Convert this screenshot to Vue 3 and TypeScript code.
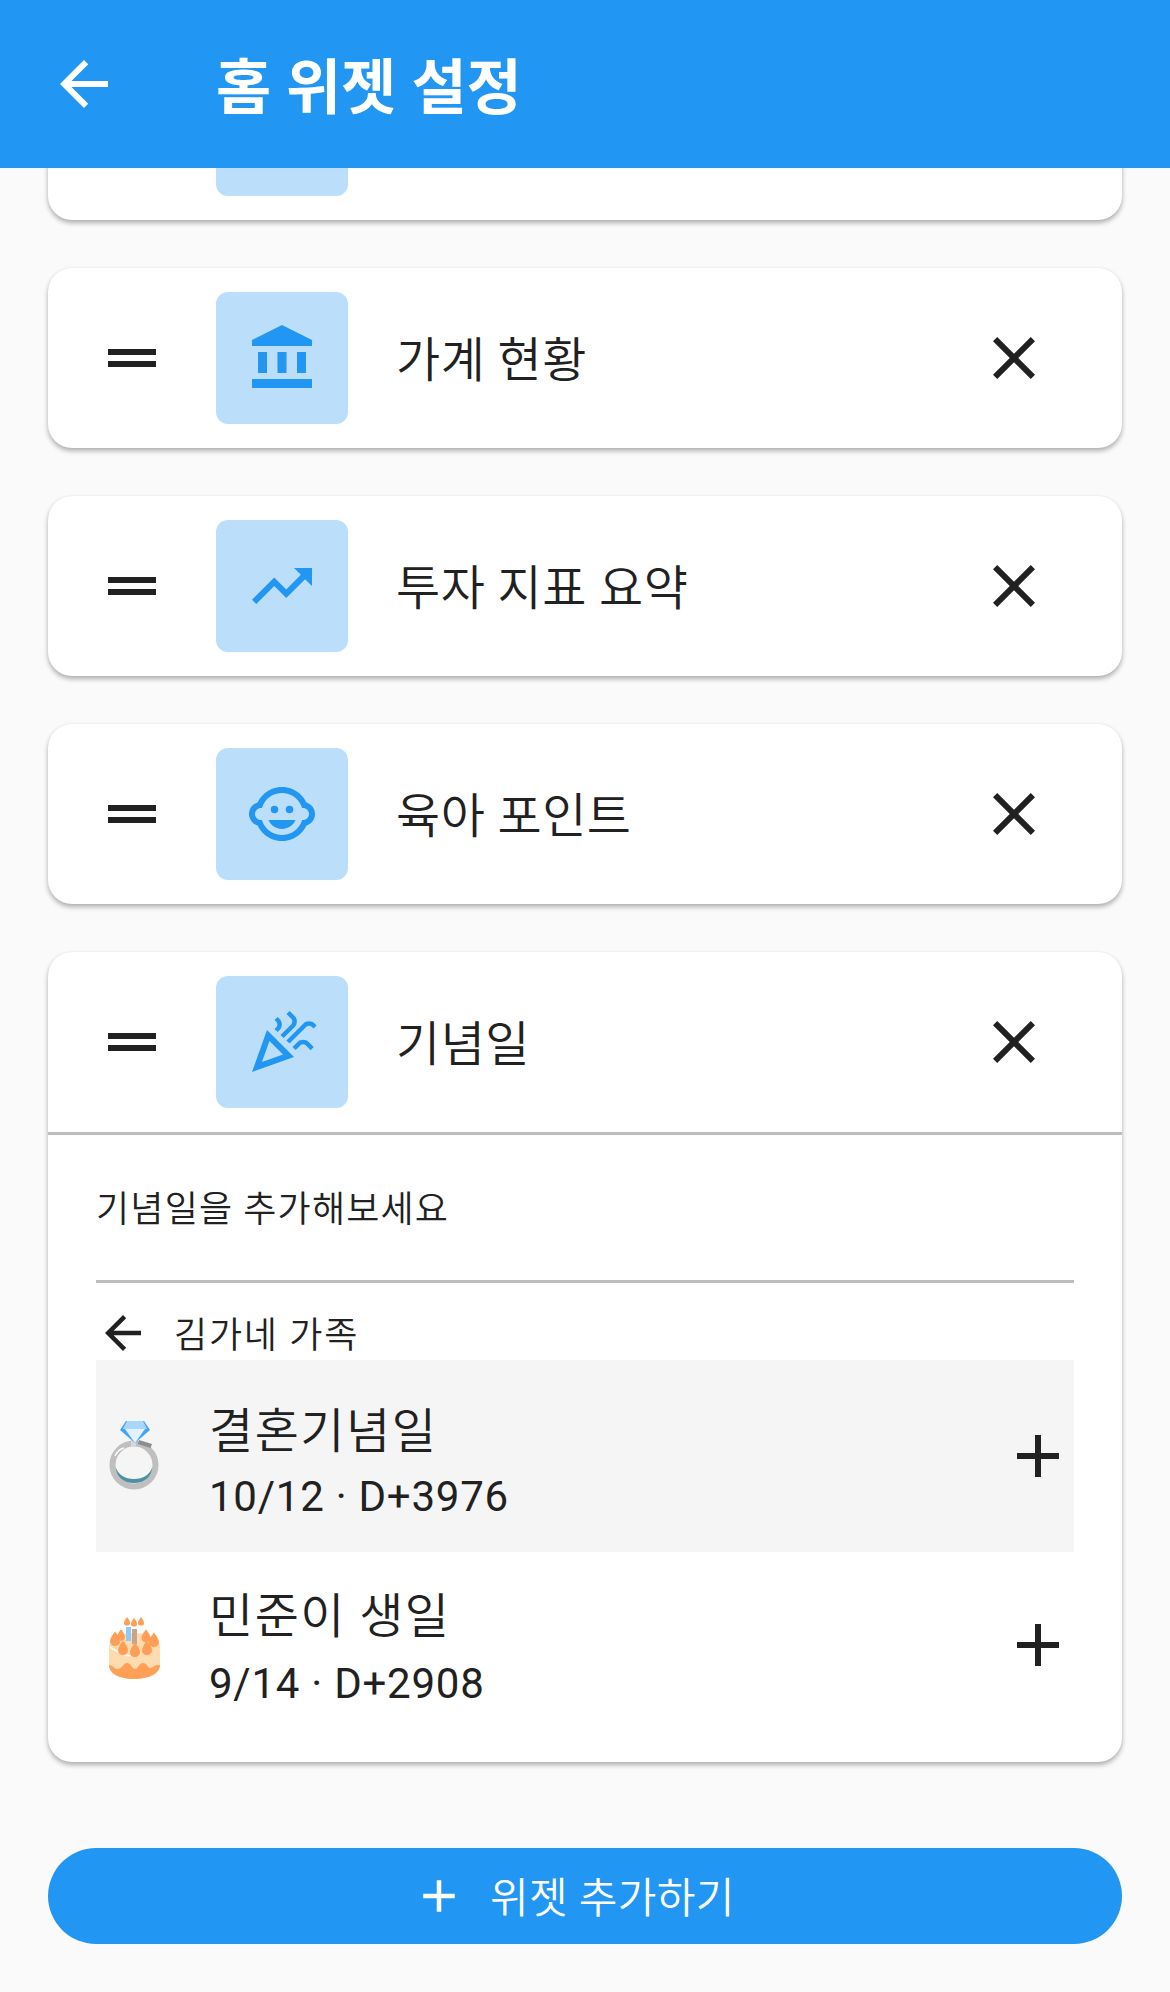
<template>
  <div class="page">
    <header class="app-bar">
      <button class="bar-back" aria-label="뒤로">
        <svg class="icon-72" viewBox="0 0 24 24"><path d="M20 11H7.83l5.59-5.59L12 4l-8 8 8 8 1.41-1.41L7.83 13H20v-2z" /></svg>
      </button>
      <h1 class="bar-title">홈 위젯 설정</h1>
    </header>

    <main class="list">
      <section class="card scrolled">
        <div class="row">
          <svg class="icon-72 handle" viewBox="0 0 24 24"><path :d="dragPath" /></svg>
          <div class="tile"></div>
        </div>
      </section>

      <section v-for="w in widgets" :key="w.title" class="card">
        <div class="row">
          <svg class="icon-72 handle" viewBox="0 0 24 24"><path :d="dragPath" /></svg>
          <div class="tile">
            <svg class="icon-72" viewBox="0 0 24 24">
              <circle v-if="w.eyes" cx="14.5" cy="10.5" r="1.25" />
              <circle v-if="w.eyes" cx="9.5" cy="10.5" r="1.25" />
              <path :d="w.icon" />
            </svg>
          </div>
          <span class="row-title">{{ w.title }}</span>
          <svg class="icon-72 close" viewBox="0 0 24 24"><path d="M19 6.41 17.59 5 12 10.59 6.41 5 5 6.41 10.59 12 5 17.59 6.41 19 12 13.41 17.59 19 19 17.59 13.41 12z" /></svg>
        </div>

        <div v-if="w.expanded" class="detail">
          <div class="field">기념일을 추가해보세요</div>
          <div class="crumb">
            <svg class="icon-54" viewBox="0 0 24 24"><path d="M20 11H7.83l5.59-5.59L12 4l-8 8 8 8 1.41-1.41L7.83 13H20v-2z" /></svg>
            <span>김가네 가족</span>
          </div>

          <div class="item hovered">
            <svg class="emoji" viewBox="13 10 54 72">
              <circle cx="39" cy="55" r="21.5" fill="none" stroke="#bfbfbf" stroke-width="6" />
              <path d="M20.5 57c1 10 8 16 18.500 16s17.500-6 18.500-16c-3 8-9 12-18.500 12s-15.500-4-18.500-12z" fill="#4f8fa3" />
              <path d="M20 46c2-4 5-7 9-8" fill="none" stroke="#fff" stroke-width="1.500" />
              <path d="M44 30l13 4-1.500 4-12.500-4z" fill="#8d8d8d" />
              <rect x="36" y="30" width="5" height="7" fill="#d8d8d8" />
              <path d="M31 11h18l6 9-15 13-15-13z" fill="#42a5f5" />
              <path d="M32 11h16l4 8H28z" fill="#a9d7fb" />
              <path d="M30 19h20l-10 14z" fill="#e3f2fd" />
            </svg>
            <div class="item-text">
              <div class="item-title">결혼기념일</div>
              <div class="item-sub">10/12 · D+3976</div>
            </div>
            <svg class="icon-72 add" viewBox="0 0 24 24"><path :d="addPath" /></svg>
          </div>

          <div class="item second">
            <svg class="emoji" viewBox="13 4 54 72">
              <path d="M14 42c0-8 12-14 25-14s26 6 26 14v17c0 9-12 15-26 15S14 68 14 59z" fill="#ffdcb0" />
              <path d="M14 60c4 0 5 4 9 4s5-6 9-6 5 6 8 6 4-6 8-6 5 6 8 5 5-4 9-3c0 9-12 14-26 14S14 69 14 60z" fill="#ffa057" />
              <path d="M15 42c7 5 14 8 20 9" fill="none" stroke="#fff" stroke-width="1.500" />
              <rect x="31" y="22" width="5" height="14" fill="#90caf9" />
              <rect x="37" y="24" width="5" height="15" fill="#c9a48a" />
              <path v-for="(b, i) in berries" :key="i" :d="dropPath(b[0], b[1], b[2])" fill="#ff9f57" />
            </svg>
            <div class="item-text">
              <div class="item-title">민준이 생일</div>
              <div class="item-sub">9/14 · D+2908</div>
            </div>
            <svg class="icon-72 add" viewBox="0 0 24 24"><path :d="addPath" /></svg>
          </div>
        </div>
      </section>
    </main>

    <footer class="footer">
      <button class="add-widget">
        <svg class="icon-54" viewBox="0 0 24 24"><path :d="addPath" /></svg>
        <span>위젯 추가하기</span>
      </button>
    </footer>
  </div>
</template>

<script setup lang="ts">
interface WidgetRow {
  title: string
  icon: string
  eyes?: boolean
  expanded?: boolean
}

const dragPath = 'M20 9H4v2h16V9zM4 15h16v-2H4v2z'
const addPath = 'M19 13h-6v6h-2v-6H5v-2h6V5h2v6h6v2z'

const widgets: WidgetRow[] = [
  {
    title: '가계 현황',
    icon: 'M4 10h3v7H4zM10.5 10h3v7h-3zM2 19h20v3H2zM17 10h3v7h-3zM12 1L2 6v2h20V6z',
  },
  {
    title: '투자 지표 요약',
    icon: 'M16 6l2.29 2.29-4.88 4.88-4-4L2 16.59 3.41 18l6-6 4 4 6.3-6.29L22 12V6z',
  },
  {
    title: '육아 포인트',
    eyes: true,
    icon: 'M22.94 12.66c.04-.21.06-.43.06-.66s-.02-.45-.06-.66c-.25-1.51-1.36-2.74-2.81-3.17-.53-1.12-1.28-2.1-2.19-2.91C16.36 3.85 14.28 3 12 3s-4.36.85-5.94 2.26c-.92.81-1.67 1.8-2.19 2.91-1.45.43-2.56 1.65-2.81 3.17-.04.21-.06.43-.06.66s.02.45.06.66c.25 1.51 1.36 2.74 2.81 3.17.52 1.11 1.27 2.09 2.17 2.89C7.62 20.14 9.71 21 12 21s4.38-.86 5.97-2.28c.9-.8 1.65-1.79 2.17-2.89 1.44-.43 2.55-1.65 2.8-3.17zM19 14c-.1 0-.19-.02-.29-.03-.2.67-.49 1.29-.86 1.86C16.6 17.74 14.45 19 12 19s-4.6-1.26-5.85-3.17c-.37-.57-.66-1.19-.86-1.86-.1.01-.19.03-.29.03-1.1 0-2-.9-2-2s.9-2 2-2c.1 0 .19.02.29.03.2-.67.49-1.29.86-1.86C7.4 6.26 9.55 5 12 5s4.6 1.26 5.85 3.17c.37.57.66 1.19.86 1.86.1-.01.19-.03.29-.03 1.1 0 2 .9 2 2s-.9 2-2 2zM7.5 14c.76 1.77 2.49 3 4.5 3s3.74-1.23 4.5-3h-9z',
  },
  {
    title: '기념일',
    expanded: true,
    icon: 'M2 22l14-5-9-9zm10.35-5.82L5.3 18.7l2.52-7.05 4.53 4.53zm2.18-3.65l5.59-5.59c.49-.49 1.28-.49 1.77 0l.59.59 1.06-1.06-.59-.59c-1.07-1.07-2.82-1.07-3.89 0l-5.59 5.59 1.06 1.06zm-4.44-5.48l-.59.59 1.06 1.06.59-.59c1.07-1.07 1.07-2.82 0-3.89l-.59-.59-1.06 1.07.59.59c.48.48.48 1.28 0 1.76zm7 5l-1.59 1.59 1.06 1.06 1.59-1.59c.49-.49 1.28-.49 1.77 0l1.61 1.61 1.06-1.06-1.61-1.61c-1.08-1.07-2.82-1.07-3.89 0zm-2-6l-3.59 3.59 1.06 1.06 3.59-3.59c1.07-1.07 1.07-2.82 0-3.89l-1.59-1.59-1.06 1.06 1.59 1.59c.48.49.48 1.29 0 1.77z',
  },
]

// 케이크 위 딸기와 촛불 [x, y, 크기]
const berries: number[][] = [
  [20, 35, 5], [28, 44, 5], [40, 46, 5], [52, 44, 5], [59, 36, 5],
  [51, 32, 4.500], [26, 31, 4], [32, 17, 3], [39, 18, 3], [46, 17, 3],
]

function dropPath(x: number, y: number, r: number) {
  return `M${x} ${y - r * 1.7}C${x + r * 0.5} ${y - r} ${x + r} ${y - r * 0.4} ${x + r} ${y + r * 0.3}` +
    `A${r} ${r * 0.9} 0 0 1 ${x - r} ${y + r * 0.3}C${x - r} ${y - r * 0.4} ${x - r * 0.5} ${y - r} ${x} ${y - r * 1.7}z`
}
</script>

<style scoped>
.page {
  display: flex;
  flex-direction: column;
  height: 1992px;
  background: #fafafa;
  color: #212121;
  font-family: Roboto, "Noto Sans CJK KR", sans-serif;
  font-weight: 350;
}

.app-bar {
  position: relative;
  z-index: 1;
  display: flex;
  align-items: center;
  flex: none;
  height: 168px;
  padding-left: 48px;
  background: #2196f3;
  color: #fff;
}

.bar-back {
  display: flex;
  padding: 0;
  border: 0;
  background: none;
  color: inherit;
}

.bar-title {
  margin: 0 0 0 96px;
  padding-top: 10px;
  font-size: 60px;
  font-weight: 700;
  line-height: 72px;
}

.icon-72 {
  flex: none;
  width: 72px;
  height: 72px;
  fill: currentColor;
}

.icon-54 {
  flex: none;
  width: 54px;
  height: 54px;
  fill: currentColor;
}

.list {
  flex: 1;
  display: flex;
  flex-direction: column;
  gap: 48px;
  padding: 0 48px;
  overflow: hidden;
}

.card {
  flex: none;
  border-radius: 24px;
  background: #fff;
  box-shadow: 0 3px 5px rgba(0, 0, 0, 0.3), 0 0 2px rgba(0, 0, 0, 0.06);
}

.scrolled {
  margin-top: -128px;
}

.row {
  display: flex;
  align-items: center;
  height: 180px;
  padding: 0 72px 0 48px;
}

.handle {
  margin-right: 48px;
}

.tile {
  display: flex;
  align-items: center;
  justify-content: center;
  flex: none;
  width: 132px;
  height: 132px;
  border-radius: 12px;
  background: #bbdefb;
  color: #2196f3;
}

.row-title {
  flex: 1;
  margin-left: 48px;
  padding-top: 5px;
  font-size: 48px;
  letter-spacing: 0.5px;
  line-height: 66px;
}

.detail {
  padding: 48px 48px 24px;
  border-top: 3px solid #bdbdbd;
}

.field {
  padding-top: 3px;
  padding-bottom: 46px;
  border-bottom: 3px solid #bdbdbd;
  font-size: 36px;
  letter-spacing: 1.2px;
  line-height: 48px;
}

.crumb {
  display: flex;
  align-items: center;
  gap: 24px;
  height: 54px;
  margin-top: 23px;
  font-size: 36px;
  letter-spacing: 1.8px;
}

.crumb span {
  margin-top: -2px;
}

.item {
  display: flex;
  align-items: center;
  height: 192px;
  padding-left: 12px;
}

.item.hovered {
  background: #f5f5f5;
}

.item.second {
  height: 186px;
}

.emoji {
  flex: none;
  width: 54px;
  height: 72px;
}

.item-text {
  flex: 1;
  margin-left: 47px;
  padding-top: 14px;
}

.item.second .item-text {
  padding-top: 8px;
}

.item-title {
  font-size: 48px;
  letter-spacing: 1.5px;
  line-height: 66px;
}

.item-sub {
  margin-top: 2px;
  font-size: 42px;
  font-weight: 400;
  letter-spacing: 0.75px;
  line-height: 60px;
}

.item.second .item-sub {
  margin-top: 4px;
}

.footer {
  flex: none;
  padding: 0 48px 48px;
}

.add-widget {
  display: flex;
  align-items: center;
  gap: 24px;
  width: 100%;
  height: 96px;
  padding: 0 0 0 364px;
  border: 0;
  border-radius: 48px;
  background: #2196f3;
  color: #fff;
  font-family: inherit;
  font-size: 42px;
  font-weight: 350;
  line-height: 54px;
}

.add-widget span {
  padding-top: 5px;
  letter-spacing: 0.4px;
}
</style>

<style>
html,
body {
  background: #fafafa;
}
</style>
